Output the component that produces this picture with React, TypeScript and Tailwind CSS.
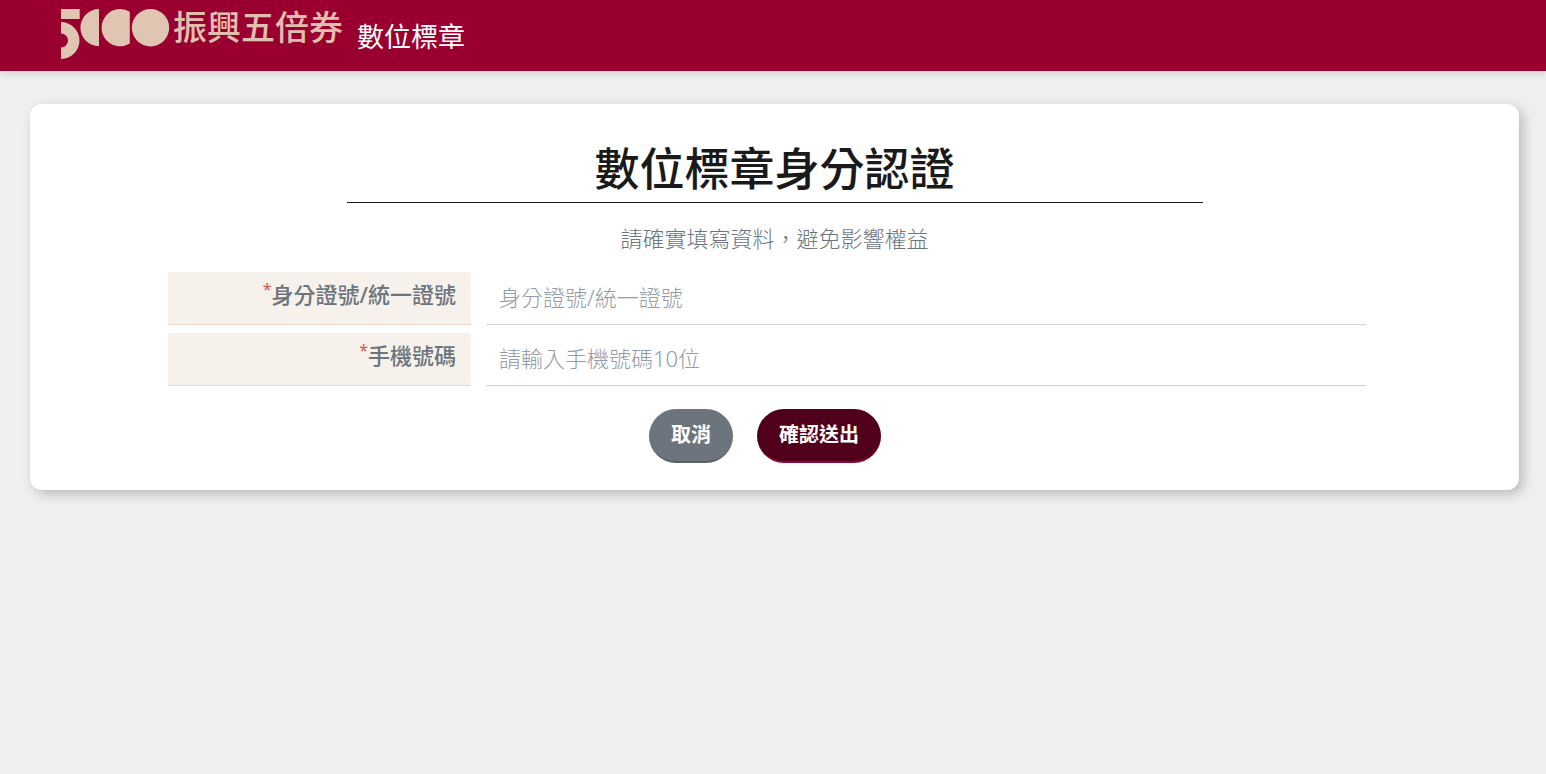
const fields = [
  {
    id: "idNumber",
    label: "身分證號/統一證號",
    placeholder: "身分證號/統一證號",
    type: "text",
  },
  {
    id: "phone",
    label: "手機號碼",
    placeholder: "請輸入手機號碼10位",
    type: "tel",
  },
];

const Logo = () => (
  <svg width="109" height="51" viewBox="0 0 109 51" fill="#dfc5b2" aria-hidden="true">
    <path d="M0 0H18.700V10H0Z" />
    <path d="M0 13A18.500 18.500 0 0 1 0 50V38.500A7 7 0 0 0 0 24.500Z" />
    <path d="M38 0V37.200A18.600 18.600 0 0 1 38 0Z" />
    <path d="M68.800 2.800A18.600 18.600 0 1 0 68.800 34.600Z" />
    <circle cx="89.500" cy="18.700" r="18.700" />
  </svg>
);

const Header = () => (
  <header className="flex h-[71px] items-start bg-[#99002f] pl-[61px] shadow-[0_2px_8px_rgba(0,0,0,0.15)]">
    <a href="#" className="flex items-start gap-[14px]">
      <span className="flex items-start gap-[3px] pt-2">
        <span className="pt-px">
          <Logo />
        </span>
        <span className="text-[34px] leading-[38px] font-medium text-[#e1bfaf]">振興五倍券</span>
      </span>
      <span className="pt-4 text-[27px] leading-[42px] font-normal text-white">數位標章</span>
    </a>
  </header>
);

const App = () => {
  return (
    <div className="min-h-screen bg-[#efefef] font-['Noto_Sans','Noto_Sans_CJK_TC',sans-serif]">
      <Header />

      <main className="mt-[33px] mr-[27px] ml-[30px] rounded-xl bg-white pt-[34px] pb-[27px] shadow-[4px_4px_12px_rgba(0,0,0,0.22)]">
        <h1 className="mx-auto max-w-[856px] border-b border-[#1a1a1a] pb-0.5 text-center text-[45px] leading-[62px] font-medium text-[#1a1a1a]">
          數位標章身分認證
        </h1>
        <p className="mt-[19px] text-center text-[22px] leading-8 font-light text-[#6c757d]">
          請確實填寫資料，避免影響權益
        </p>

        <form>
          <div className="mt-[18px] flex flex-col gap-2 pr-[153px] pl-[138px]">
            {fields.map((field) => (
              <div key={field.id} className="grid grid-cols-[303fr_880fr] gap-[15px]">
                <label
                  htmlFor={field.id}
                  className="h-[53px] border-b border-[#e8d9cb] bg-[#f6f1eb] pt-1.5 pr-[15px] text-right text-[22px] leading-8 font-medium text-[#6c757d]"
                >
                  <sup className="-top-2 text-base leading-none font-normal text-[#d9534f]">*</sup>
                  {field.label}
                </label>
                <input
                  id={field.id}
                  type={field.type}
                  placeholder={field.placeholder}
                  className="h-[53px] min-w-0 border-b border-[#ced4da] px-[13px] pb-0.5 text-[22px] font-light text-[#495057] outline-none placeholder:text-[#939ca4]"
                />
              </div>
            ))}
          </div>

          <div className="mt-[23px] flex justify-center gap-6 pr-[19px]">
            <button
              type="button"
              className="h-[54px] rounded-full border-b-2 border-[#596067] bg-[#6c757d] px-[22px] text-[20px] font-bold text-white"
            >
              取消
            </button>
            <button
              type="submit"
              className="h-[54px] rounded-full border-b-2 border-[#8a0a31] bg-[#50001a] px-[22px] text-[20px] font-bold text-white"
            >
              確認送出
            </button>
          </div>
        </form>
      </main>
    </div>
  );
};

export default App;
